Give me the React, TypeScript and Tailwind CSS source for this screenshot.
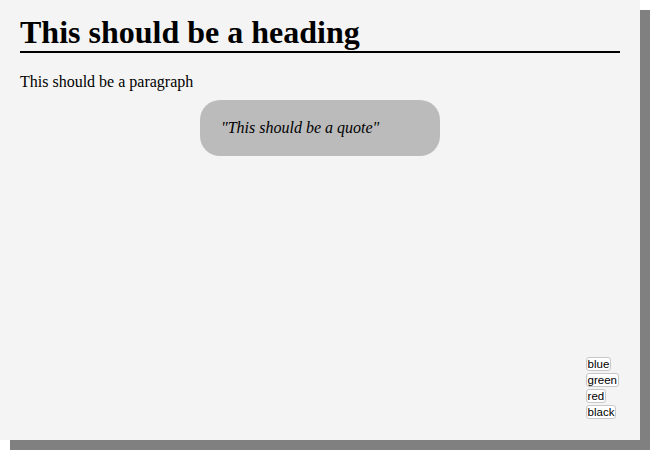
import React from "react";

export default function App() {
  const btns = ["blue", "green", "red", "black"];
  return (
    <div className="w-[650px] h-[450px] bg-white">
      <div
        className="w-[640px] h-[440px] bg-[#f4f4f4] shadow-[10px_10px_0_#808080] flex flex-col px-[20px] text-black"
        style={{ fontFamily: '"Liberation Serif", serif' }}
      >
        <h1 className="mt-[14px] text-[32px] leading-[37px] font-bold border-b-2 border-black">
          This should be a heading
        </h1>
        <p className="mt-[20px] text-[16px] leading-[18px]">This should be a paragraph</p>
        <div className="self-center mt-[9px] w-[240px] h-[56px] rounded-[20px] bg-[#bbbbbb] pt-[16px] pl-[21px]">
          <span className="italic text-[16px] leading-[18px]">"This should be a quote"</span>
        </div>
        <div className="mt-auto mb-[21px] self-end mr-[1px] flex flex-col items-start gap-[2px]">
          {btns.map((b) => (
            <button
              key={b}
              className="bg-white border border-[#c8c8c8] rounded-[3px] px-[1px] text-[11.5px] leading-[12px] text-black"
              style={{ fontFamily: '"Liberation Sans", Arial, sans-serif' }}
            >
              {b}
            </button>
          ))}
        </div>
      </div>
    </div>
  );
}
